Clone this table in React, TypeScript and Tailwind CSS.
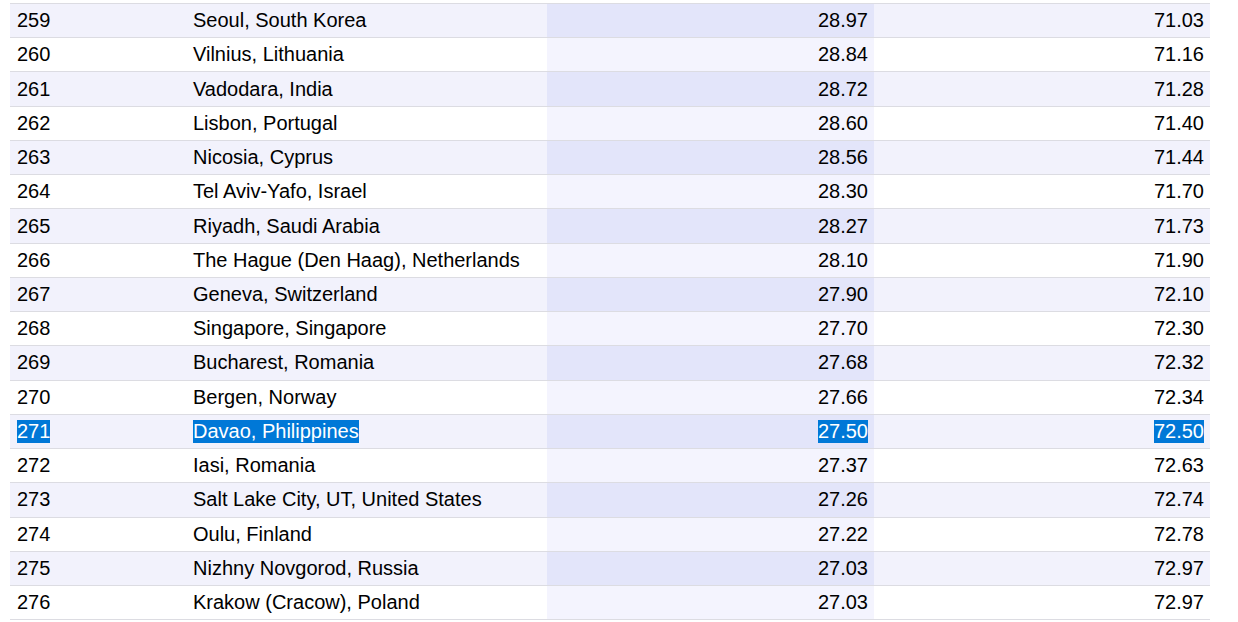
import React from 'react';

type Row = { rank: number; city: string; a: string; b: string };

const rows: Row[] = [
  { rank: 259, city: 'Seoul, South Korea', a: '28.97', b: '71.03' },
  { rank: 260, city: 'Vilnius, Lithuania', a: '28.84', b: '71.16' },
  { rank: 261, city: 'Vadodara, India', a: '28.72', b: '71.28' },
  { rank: 262, city: 'Lisbon, Portugal', a: '28.60', b: '71.40' },
  { rank: 263, city: 'Nicosia, Cyprus', a: '28.56', b: '71.44' },
  { rank: 264, city: 'Tel Aviv-Yafo, Israel', a: '28.30', b: '71.70' },
  { rank: 265, city: 'Riyadh, Saudi Arabia', a: '28.27', b: '71.73' },
  { rank: 266, city: 'The Hague (Den Haag), Netherlands', a: '28.10', b: '71.90' },
  { rank: 267, city: 'Geneva, Switzerland', a: '27.90', b: '72.10' },
  { rank: 268, city: 'Singapore, Singapore', a: '27.70', b: '72.30' },
  { rank: 269, city: 'Bucharest, Romania', a: '27.68', b: '72.32' },
  { rank: 270, city: 'Bergen, Norway', a: '27.66', b: '72.34' },
  { rank: 271, city: 'Davao, Philippines', a: '27.50', b: '72.50' },
  { rank: 272, city: 'Iasi, Romania', a: '27.37', b: '72.63' },
  { rank: 273, city: 'Salt Lake City, UT, United States', a: '27.26', b: '72.74' },
  { rank: 274, city: 'Oulu, Finland', a: '27.22', b: '72.78' },
  { rank: 275, city: 'Nizhny Novgorod, Russia', a: '27.03', b: '72.97' },
  { rank: 276, city: 'Krakow (Cracow), Poland', a: '27.03', b: '72.97' },
];

const Sel: React.FC<{ on: boolean; children: React.ReactNode }> = ({ on, children }) => (
  <span className={on ? 'leading-[23px] bg-[#0078d7] text-white' : 'leading-[23px]'}>{children}</span>
);

export default function App() {
  return (
    <div className="bg-white min-h-screen pt-[3px] px-[10px] font-['Liberation_Sans',Arial,sans-serif] text-[20px] leading-[23px] text-black">
      <div className="w-[1200px] border-t border-[#dcdce2]">
        {rows.map((r, i) => {
          const odd = i % 2 === 0;
          const sel = r.rank === 271;
          return (
            <div
              key={r.rank}
              className={`grid grid-cols-[177px_360px_327px_336px] h-[34.24px] border-b border-[#dcdce2] ${
                odd ? 'bg-[#f2f2fc]' : 'bg-white'
              }`}
            >
              <div className="flex items-center px-[7px]">
                <Sel on={sel}>{r.rank}</Sel>
              </div>
              <div className="flex items-center px-[6px]">
                <Sel on={sel}>{r.city}</Sel>
              </div>
              <div
                className={`flex items-center justify-end px-[6px] ${
                  odd ? 'bg-[#e3e5fa]' : 'bg-[#f4f4fe]'
                }`}
              >
                <Sel on={sel}>{r.a}</Sel>
              </div>
              <div className="flex items-center justify-end px-[6px]">
                <Sel on={sel}>{r.b}</Sel>
              </div>
            </div>
          );
        })}
      </div>
    </div>
  );
}
